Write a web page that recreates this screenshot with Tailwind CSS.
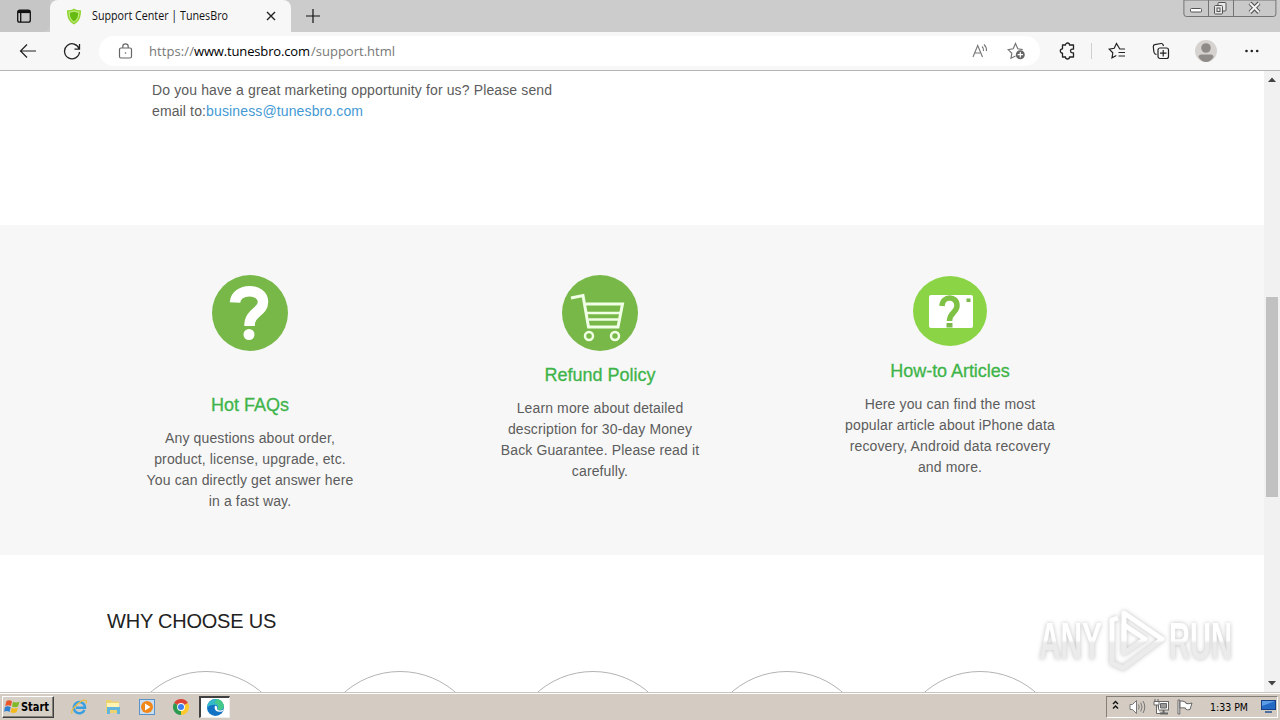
<!DOCTYPE html>
<html lang="en">
<head>
    <meta charset="UTF-8">
    <meta name="viewport" content="width=device-width, initial-scale=1.0">
    <title>Support Center | TunesBro</title>
    <script src="https://cdn.jsdelivr.net/npm/@tailwindcss/browser@4"></script>
</head>
<body class="w-[1280px] h-[720px] overflow-hidden bg-white flex flex-col font-['Liberation_Sans',sans-serif]">
    <!-- Tab strip -->
    <header class="relative h-8 shrink-0 bg-[#cccccc] flex font-['Open_Sans',sans-serif]">
        <div class="w-[50px] h-8 bg-[#c6c6c6] rounded-br-lg flex items-center justify-center">
            <svg class="w-4 h-4 -ml-0.5" viewBox="0 0 16 16" fill="none" stroke="#111" stroke-width="1.3">
                <rect x="1.7" y="2.2" width="12.6" height="12" rx="2"/>
                <path d="M2 3.6h12" stroke-width="3"/>
                <path d="M4.7 4v10"/>
            </svg>
        </div>
        <div class="w-[241px] h-8 bg-[#f7f7f7] rounded-t-lg flex items-center pl-4 pr-3">
            <svg class="w-4 h-[17px]" viewBox="0 0 16 17">
                <path d="M8 .5c2 1.5 4.500 1.800 7 1.800 0 7-1.500 11.500-7 14.200C2.500 13.800 1 9.300 1 2.300 3.500 2.300 6 2 8 .5z" fill="#8fd42f"/>
                <path d="M8 2.300c1.600 1 3.300 1.400 5.400 1.500-.2 5.500-1.600 8.700-5.400 10.900C4.200 12.500 2.800 9.300 2.600 3.800 4.700 3.700 6.400 3.300 8 2.300z" fill="#c9f08a"/>
                <path d="M8 3.500c1.400.8 2.700 1.100 4.300 1.300-.2 4.500-1.300 6.900-4.300 8.700-3-1.800-4.100-4.200-4.300-8.700C5.300 4.600 6.600 4.300 8 3.500z" fill="#66bb12"/>
            </svg>
            <svg class="ml-[9px] w-[140px] h-5" viewBox="0 0 140 20"><text x="1" y="14" font-size="11.800" textLength="136" lengthAdjust="spacingAndGlyphs" fill="#111">Support Center | TunesBro</text></svg>
            <svg class="ml-auto mr-0.5 w-3 h-3" viewBox="0 0 12 12" stroke="#222" stroke-width="1.400"><path d="M2 2l8 8M10 2l-8 8"/></svg>
        </div>
        <svg class="ml-3.5 mt-2 w-4 h-4" viewBox="0 0 16 16" stroke="#111" stroke-width="1.200"><path d="M8 1v14M1 8h14"/></svg>
        <!-- Window buttons -->
        <svg class="ml-auto mr-[3px] w-[94px] h-[18px]" viewBox="0 0 94 18" fill="none" stroke="#737373">
            <path d="M.9 0v14q0 2.500 2.500 2.500h87q2.500 0 2.500-2.500V0z" fill="#c9c9c9"/>
            <path d="M25.500 0v16M50.500 0v16"/>
            <rect x="7.500" y="8.500" width="11" height="3.500" rx="1" fill="#fff" stroke="#555"/>
            <g fill="#e9e9e9" stroke="#555">
                <rect x="35" y="2.500" width="8" height="8.500" rx="1"/>
                <rect x="31.500" y="5.500" width="8" height="8.500" rx="1"/>
                <rect x="34" y="8" width="3" height="3.500"/>
            </g>
            <path d="M67 3l9 9.500M76 3l-9 9.500" stroke="#555" stroke-width="4"/>
            <path d="M67 3.200l9 9M76 3.200l-9 9" stroke="#f4f4f4" stroke-width="2"/>
        </svg>
    </header>

    <!-- Toolbar -->
    <nav class="h-[39px] shrink-0 bg-[#f7f7f7] border-b border-[#b5b5b5] flex items-center font-['Open_Sans',sans-serif]">
        <svg class="ml-[19px] w-[18px] h-[18px]" viewBox="0 0 18 18" fill="none" stroke="#222" stroke-width="1.200"><path d="M17 9H1.500M8 2.500L1.500 9 8 15.500"/></svg>
        <svg class="ml-[26px] w-[18px] h-[18px]" viewBox="0 0 18 18" fill="none" stroke="#222" stroke-width="1.300"><path d="M16.200 7A7.500 7.500 0 1 0 16.500 10M16.500 2v5.200h-5"/></svg>
        <div class="ml-[18px] w-[941px] h-[30px] bg-white rounded-full flex items-center pl-[19px] pr-[14px]">
            <svg class="w-[15px] h-4" viewBox="0 0 15 16" fill="none" stroke="#666" stroke-width="1.200"><rect x="1.500" y="5" width="12" height="10" rx="1.500"/><path d="M4.800 5V3.500a2.700 2.700 0 0 1 5.400 0V5"/><circle cx="7.500" cy="10" r=".8" fill="#666" stroke="none"/></svg>
            <svg class="ml-3.5 w-[260px] h-6" viewBox="0 0 260 24" font-size="13">
                <text x="2" y="17" textLength="45" fill="#777">https://</text>
                <text x="47" y="17" textLength="116" fill="#000">www.tunesbro.com</text>
                <text x="164" y="17" textLength="84" fill="#777">/support.html</text>
            </svg>
            <svg class="ml-auto w-[17px] h-4" viewBox="0 0 17 16" fill="none" stroke="#777" stroke-width="1.100"><path d="M1 14L5.700 2.500 10.500 14M2.500 10h6.500M10 3.500a5 5 0 0 1 1.500 4.500M12 1.500a8 8 0 0 1 2.500 6.500"/></svg>
            <svg class="ml-[18px] w-[19px] h-[18px]" viewBox="0 0 19 18" fill="none" stroke="#777" stroke-width="1.200"><path d="M8.500 14l-4.500 2.300.8-5L1.200 7.600l5-.8L8.500 1.500l2.300 5.300 5 .8"/><circle cx="13.300" cy="12.700" r="4.500" fill="#666" stroke="none"/><path d="M13.300 10v5.400M10.600 12.700H16" stroke="#fff"/></svg>
        </div>
        <svg class="ml-[19px] w-[17px] h-[18px]" viewBox="0 0 17 18" fill="none" stroke="#222" stroke-width="1.300" stroke-linejoin="round"><path d="M3.500 3h3a2 2 0 0 1 4 0h4v4.200h-1.200a1.800 1.800 0 0 0 0 3.600h1.200V15h-4a2 2 0 0 1-4 0h-3v-3.800a2.200 2.200 0 0 1 0-4.400z"/></svg>
        <div class="ml-[15px] w-px h-4 bg-[#cfcfcf]"></div>
        <svg class="ml-4 w-[18px] h-[18px]" viewBox="0 0 18 18" fill="none" stroke="#222" stroke-width="1.200"><path d="M17 7h-5.200L8.500 1.500 6.200 6.300l-5 .8 3.600 3.700-.8 5 4.300-2.300M10.500 10.500H17M10.500 14H17"/></svg>
        <svg class="ml-[26px] w-[18px] h-[18px]" viewBox="0 0 18 18" fill="none" stroke="#222" stroke-width="1.200"><rect x="6" y="6" width="10.500" height="10.500" rx="2"/><path d="M11.200 8v6.500M8 11.200h6.500M4.500 12.500L3.200 12Q2 11 1.800 9.500L1.300 4.500Q1.300 3 2.800 2.700L9 1.500q1.700-.2 2.200 1.500l.3 1"/></svg>
        <svg class="ml-[25px] w-[22px] h-[22px]" viewBox="0 0 22 22"><circle cx="11" cy="11" r="11" fill="#d5d2d0"/><circle cx="11" cy="8" r="4.800" fill="#8f8b88"/><path d="M3.500 17q0-2.500 3-2.500h9q3 0 3 2.500-3 5-7.500 5t-7.500-5z" fill="#8f8b88"/></svg>
        <svg class="ml-[27px] w-4 h-4" viewBox="0 0 16 16" fill="#222"><circle cx="2.500" cy="8" r="1.300"/><circle cx="7.800" cy="8" r="1.300"/><circle cx="13.200" cy="8" r="1.300"/></svg>
    </nav>

    <!-- Page -->
    <div class="relative h-[621px] shrink-0 flex overflow-hidden">
        <main class="w-[1264px] text-sm leading-[21px] text-[#5c5c5c]">
            <div class="h-[154px] pt-[9px] pl-[152px]">
                <p class="whitespace-nowrap tracking-[0.13px]">Do you have a great marketing opportunity for us? Please send<br>email to:<a class="text-[#4299d4]">business@tunesbro.com</a></p>
            </div>

            <section class="h-[330px] bg-[#f7f7f7] pl-[75px] pt-[50px] flex text-center">
                <div class="w-[350px] flex flex-col items-center">
                    <svg class="w-[76px] h-[76px]" viewBox="0 0 76 76">
                        <circle cx="38" cy="38" r="38" fill="#77b849"/>
                        <path d="M23 27.500C24 12.500 51 12.500 51 27C51 37 37.500 37 37.500 51" fill="none" stroke="#fff" stroke-width="10.500"/>
                        <circle cx="37" cy="59.500" r="5.500" fill="#fff"/>
                    </svg>
                    <h3 class="mt-[42px] h-6 leading-6 text-lg text-[#3eb449] [-webkit-text-stroke:0.3px_#3eb449]">Hot FAQs</h3>
                    <p class="mt-[11px] whitespace-nowrap tracking-[0.13px]">Any questions about order,<br>product, license, upgrade, etc.<br>You can directly get answer here<br>in a fast way.</p>
                </div>
                <div class="w-[350px] flex flex-col items-center">
                    <svg class="w-[76px] h-[76px]" viewBox="0 0 76 76" fill="none" stroke="#f0ffe5">
                        <circle cx="38" cy="38" r="38" fill="#77b849" stroke="none"/>
                        <path d="M9 23l12-2.500 5.500 31.500h29.500L60.500 29H24" stroke-width="3"/>
                        <path d="M25 38h34M26.500 44.500h31" stroke-width="2.500"/>
                        <circle cx="27" cy="61" r="4" stroke-width="2.500"/>
                        <circle cx="53" cy="61" r="4" stroke-width="2.500"/>
                    </svg>
                    <h3 class="mt-3 h-6 leading-6 text-lg text-[#3eb449] [-webkit-text-stroke:0.3px_#3eb449]">Refund Policy</h3>
                    <p class="mt-[11px] whitespace-nowrap tracking-[0.13px]">Learn more about detailed<br>description for 30-day Money<br>Back Guarantee. Please read it<br>carefully.</p>
                </div>
                <div class="w-[350px] flex flex-col items-center">
                    <svg class="mt-px w-[74px] h-[70px]" viewBox="0 0 74 70">
                        <ellipse cx="37" cy="35" rx="37" ry="35" fill="#8bd446"/>
                        <rect x="16" y="19" width="44" height="33" rx="2" fill="#fff"/>
                        <path d="M29 30C29.500 19.500 44 19.500 44 29.500C44 37 36.500 36 36.500 45" fill="none" stroke="#7fc144" stroke-width="5.500"/>
                        <path d="M33.500 47h6v4.500h-6zM53.500 22.500h4v3.500h-4z" fill="#7cb84b"/>
                    </svg>
                    <h3 class="mt-[13px] h-6 leading-6 text-lg tracking-[-0.05px] text-[#3eb449] [-webkit-text-stroke:0.3px_#3eb449]">How-to Articles</h3>
                    <p class="mt-[11px] whitespace-nowrap tracking-[0.13px]">Here you can find the most<br>popular article about iPhone data<br>recovery, Android data recovery<br>and more.</p>
                </div>
            </section>

            <section class="pt-[54px]">
                <h2 class="ml-[107px] h-6 leading-6 text-xl tracking-[-0.22px] text-[#222] whitespace-nowrap">WHY CHOOSE US</h2>
                <div class="mt-[38px] ml-[121px] flex gap-[23.500px]">
                    <div class="w-[170px] h-[170px] shrink-0 rounded-full border border-[#b3b3b3]"></div>
                    <div class="w-[170px] h-[170px] shrink-0 rounded-full border border-[#b3b3b3]"></div>
                    <div class="w-[170px] h-[170px] shrink-0 rounded-full border border-[#b3b3b3]"></div>
                    <div class="w-[170px] h-[170px] shrink-0 rounded-full border border-[#b3b3b3]"></div>
                    <div class="w-[170px] h-[170px] shrink-0 rounded-full border border-[#b3b3b3]"></div>
                </div>
            </section>
        </main>

        <!-- Scrollbar -->
        <div class="w-4 bg-[#f1f1f1] flex flex-col items-center">
            <svg class="mt-1.5 w-2 h-[5px]" viewBox="0 0 8 5"><path d="M0 5l4-4.500L8 5z" fill="#444"/></svg>
            <div class="mt-[215px] w-3 h-[200px] bg-[#c1c1c1]"></div>
            <svg class="mt-auto mb-1.5 w-2 h-[5px]" viewBox="0 0 8 5"><path d="M0 0l4 4.500L8 0z" fill="#444"/></svg>
        </div>

        <!-- Watermark -->
        <svg class="absolute left-[1030px] top-[534px] w-[220px] h-[72px] drop-shadow-[0_0_2px_rgba(0,0,0,0.25)]" viewBox="0 0 220 72" font-family="Liberation Sans" font-size="51" font-weight="bold">
            <defs>
                <linearGradient id="fade" gradientUnits="userSpaceOnUse" x1="0" y1="35" x2="0" y2="38">
                    <stop offset="0" stop-color="#fff"/>
                    <stop offset="1" stop-color="#ebebeb"/>
                </linearGradient>
            </defs>
            <text x="9" y="54" fill="url(#fade)" textLength="63" lengthAdjust="spacingAndGlyphs">ANY</text>
            <text x="139" y="54" fill="url(#fade)" textLength="63" lengthAdjust="spacingAndGlyphs">RUN</text>
            <g fill="none" stroke="url(#fade)" stroke-width="5" stroke-linejoin="round">
                <path d="M94 46V8l38 26-39 29-11-5V15l6-2"/>
                <path d="M94 20l21 14-21 14z"/>
            </g>
        </svg>
    </div>

    <!-- Taskbar -->
    <footer class="h-7 shrink-0 bg-[#d4ccc3] border-t border-[#c9c5bd] shadow-[inset_0_1px_0_#fff] flex items-center font-['DejaVu_Sans',sans-serif]">
        <div class="ml-0.5 w-[52px] h-[22px] bg-[#d6cfc6] border border-t-white border-l-white border-r-[#404040] border-b-[#404040] shadow-[inset_-1px_-1px_0_#848078] flex items-center">
            <svg class="ml-px w-4 h-4 shrink-0" viewBox="0 0 16 16">
                <path d="M2.500 2q3-1.500 5.500.3L7 7Q4.500 5.500 1.200 7z" fill="#e8562a"/>
                <path d="M9 2.800q3 1.500 6.500 0L14 7.500q-3 1.300-6 0z" fill="#7fb928"/>
                <path d="M1 8q3-1.500 5.700.2L5.500 13Q3 11.300 0 12.800z" fill="#2f7fd0"/>
                <path d="M7.700 8.800q3 1.500 6.200 0L12.500 13.300q-3 1.500-6 0z" fill="#f6b91c"/>
            </svg>
            <svg class="w-8 h-[18px] shrink-0" viewBox="0 0 32 18"><text x="1" y="13" font-size="11.500" font-weight="bold" textLength="28" lengthAdjust="spacingAndGlyphs">Start</text></svg>
        </div>
        <!-- Internet Explorer -->
        <svg class="ml-[17px] w-4 h-4" viewBox="0 0 16 16" fill="none">
            <path d="M13.500 11a5.600 5.600 0 1 1 .5-2.300H4.800" stroke="#3a9fe0" stroke-width="2.500"/>
            <path d="M1 14.500C-1 11 11-1 15 1.500q1 .8 0 3" stroke="#e9bb42" stroke-width="1.300"/>
        </svg>
        <!-- Explorer -->
        <svg class="ml-[18px] w-4 h-4" viewBox="0 0 16 16">
            <path d="M1 1h5l1 1.500h7V14H1z" fill="#ecd371"/>
            <path d="M2 4h12v4H2z" fill="#fff4b3"/>
            <path d="M2 8h13v7h-3v-4H5v4H2z" fill="#62b6de"/>
        </svg>
        <!-- Media player -->
        <svg class="ml-[18px] w-4 h-4" viewBox="0 0 16 16">
            <rect x=".5" y=".5" width="15" height="15" fill="#c8def2" stroke="#5b91c5"/>
            <circle cx="8" cy="8" r="6" fill="#f18717"/>
            <path d="M6 4.500L11.500 8 6 11.500z" fill="#fff"/>
        </svg>
        <!-- Chrome -->
        <svg class="ml-[18px] w-4 h-4" viewBox="0 0 16 16">
            <path d="M8 8L1.070 4A8 8 0 0 1 14.930 4z" fill="#dc4437"/>
            <path d="M8 8l6.930-4A8 8 0 0 1 8 16z" fill="#fdc92c"/>
            <path d="M8 8v8A8 8 0 0 1 1.070 4z" fill="#2c9b50"/>
            <circle cx="8" cy="8" r="3.900" fill="#fff"/>
            <circle cx="8" cy="8" r="3" fill="#3d7ef0"/>
        </svg>
        <!-- Edge -->
        <div class="ml-2.5 w-[31px] h-[22px] bg-white border-t-2 border-l-2 border-t-[#404040] border-l-[#404040] border-r border-b border-r-[#eee] border-b-[#eee] flex items-center justify-center">
            <svg class="w-[17px] h-[17px]" viewBox="0 0 16 16">
                <circle cx="8" cy="8" r="8" fill="#1273c4"/>
                <path d="M.3 6.500C1.500-1 13.500-2.500 15.800 6.500c.7 3.500-4 5-6.300 3.300 1.500-2 .3-4.500-2.500-4.500-3 0-5.500 1-6.700 3z" fill="#33b9c8"/>
                <path d="M9 .1c4 .3 6.500 3 6.900 6.800.1 3-4 4.300-6.200 2.700C12 6 9 4 7 4z" fill="#45c98a"/>
                <path d="M7.500 6.500c-1.500 3.500 2 6.800 7.300 5l1.500-2.500C14 11.500 9 11.300 9.500 9.200 10 8 9 5.500 7.500 6.500z" fill="#fff"/>
            </svg>
        </div>

        <!-- Tray -->
        <div class="ml-auto mr-0.5 w-[172px] h-[22px] border border-t-[#848078] border-l-[#848078] border-r-white border-b-white flex items-center">
            <svg class="ml-[5px] mb-1 w-[7px] h-[10px]" viewBox="0 0 7 10" fill="none" stroke="#111" stroke-width="1.400"><path d="M1 4l2.500-2.500L6 4M1 8.500L3.500 6 6 8.500"/></svg>
            <svg class="ml-2.5 w-[17px] h-4" viewBox="0 0 17 16" fill="none" stroke="#777"><path d="M1 5.500h2.500l4-4v13l-4-4H1z" fill="#fff"/><path d="M9.500 5.500q1.500 2.500 0 5M11.700 3.500q2.800 4.500 0 9M14 2q3.500 6 0 12"/></svg>
            <svg class="ml-[7px] w-[17px] h-4" viewBox="0 0 17 16" stroke="#666"><rect x="5.500" y="2.500" width="10" height="8.500" fill="#fff"/><path d="M7.500 4.500h6v4.500h-6z" fill="#999"/><path d="M7 14.500h8M10.500 11v3" stroke-width="2"/><path d="M1 2.500h5V6H1zM2 0v3M5 0v3M3.500 6v8.500H7" fill="#fff"/></svg>
            <svg class="ml-[7px] w-[17px] h-4" viewBox="0 0 17 16" fill="#fff" stroke="#666"><path d="M1 1h1.800v14H1z"/><path d="M3 2q3-.5 6 1.500v1q3 .7 6-.5l-2 6.500q-2.500 1-4.500-.5V9Q6 8.500 3 9z"/></svg>
            <svg class="ml-[15px] w-[42px] h-[18px] shrink-0" viewBox="0 0 42 18"><text x="1" y="13" font-size="11" textLength="38" lengthAdjust="spacingAndGlyphs">1:33 PM</text></svg>
            <svg class="ml-2.5 w-[15px] h-[13px]" viewBox="0 0 15 13"><path d="M0 0h15v10H0z" fill="#173f83"/><path d="M1 1h13v8H1z" fill="#246ac5"/><path d="M1 1h13L1 6z" fill="#5c9ee5"/><path d="M4 11h7v2H4z" fill="#4f6f9f"/></svg>
        </div>
    </footer>
</body>
</html>
